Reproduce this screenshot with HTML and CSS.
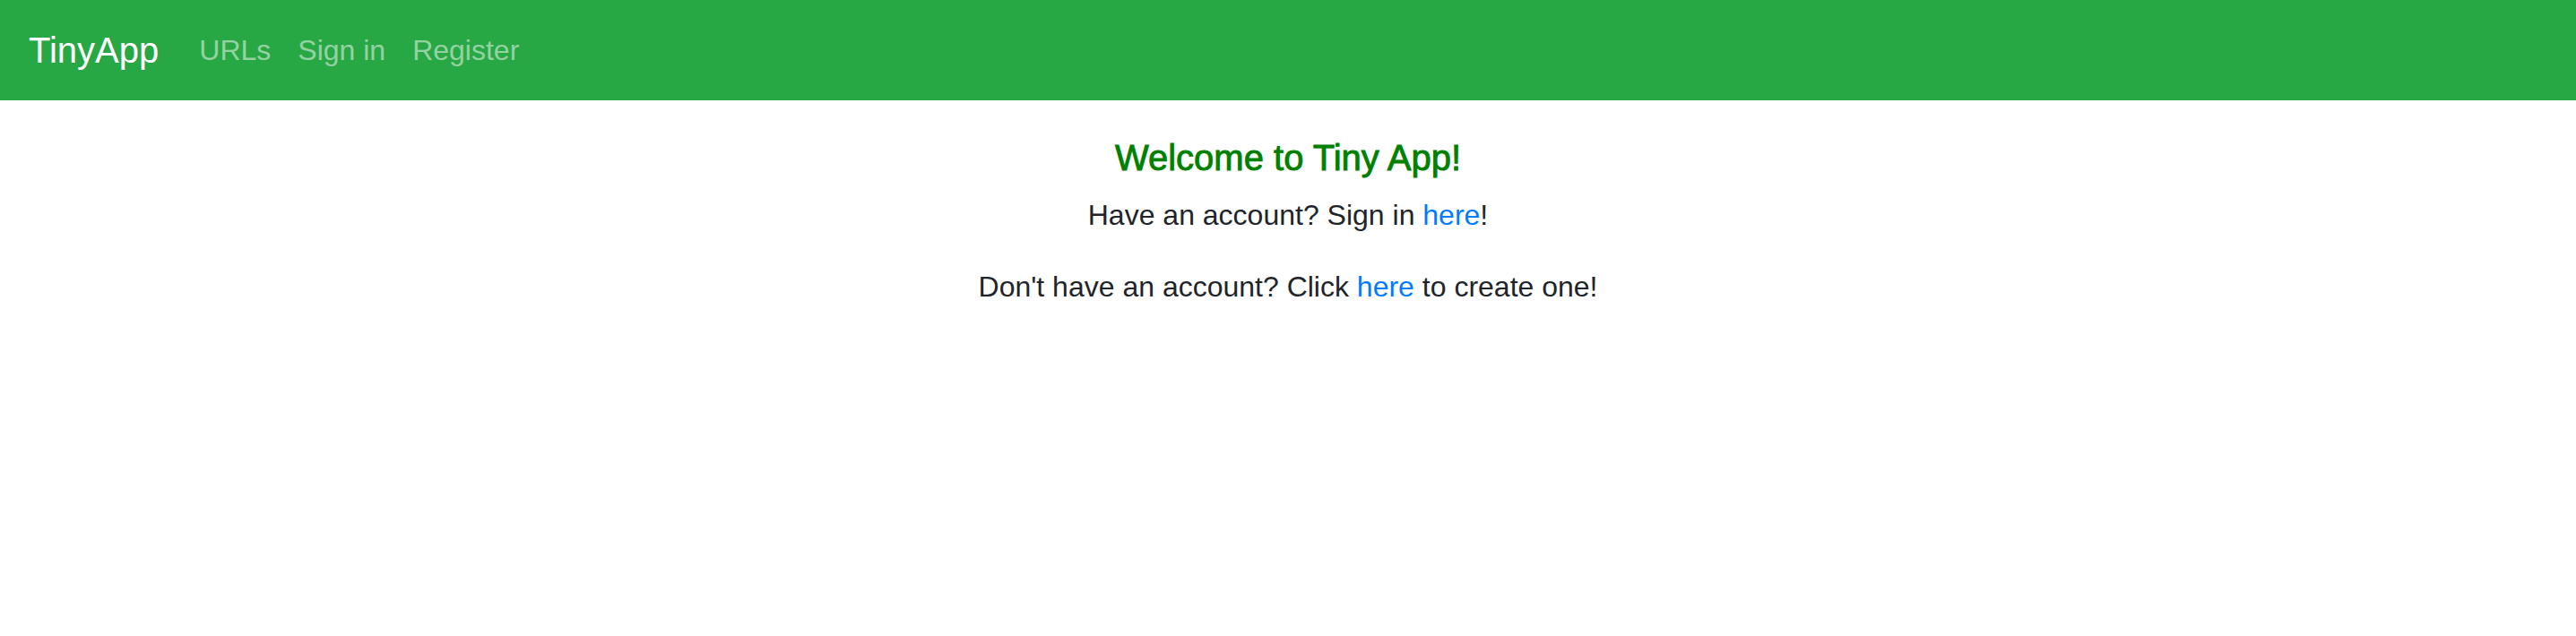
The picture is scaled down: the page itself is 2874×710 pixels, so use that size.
FILE: index.html
```html
<!DOCTYPE html>
<html lang="en">
<head>
<meta charset="utf-8">
<title>TinyApp</title>
<link rel="stylesheet" href="styles.css">
</head>
<body>
<nav class="navbar">
  <a class="brand" href="#">TinyApp</a>
  <div class="nav-links">
    <a class="nav-link" href="#">URLs</a>
    <a class="nav-link" href="#">Sign in</a>
    <a class="nav-link" href="#">Register</a>
  </div>
</nav>
<main class="content">
  <h5 class="welcome">Welcome to Tiny App!</h5>
  <p>Have an account? Sign in <a href="#">here</a>!</p>
  <p>Don't have an account? Click <a href="#">here</a> to create one!</p>
</main>
</body>
</html>
```
FILE: styles.css
```css
* { box-sizing: border-box; }
html, body {
  margin: 0;
  padding: 0;
  background: #fff;
}
body {
  font-family: "Liberation Sans", Arial, sans-serif;
  font-size: 32px;
  line-height: 1.5;
  color: #212529;
}
a { color: #007bff; text-decoration: none; }

.navbar {
  display: flex;
  align-items: center;
  background: #28a745;
  padding: 16px 32px;
  height: 112px;
}
.brand {
  color: #fff;
  font-size: 40px;
  line-height: 60px;
  padding: 10px 0;
  margin-right: 30px;
}
.nav-links {
  display: flex;
}
.nav-link {
  color: rgba(255, 255, 255, 0.5);
  padding: 8px 15px;
  line-height: 48px;
}

.content {
  text-align: center;
  padding-top: 40px;
}
.welcome {
  margin: 0 0 16px;
  font-size: 40px;
  font-weight: 500;
  line-height: 48px;
  color: green;
  -webkit-text-stroke: 0.9px green;
}
.content p {
  margin: 0 0 32px;
}
```
